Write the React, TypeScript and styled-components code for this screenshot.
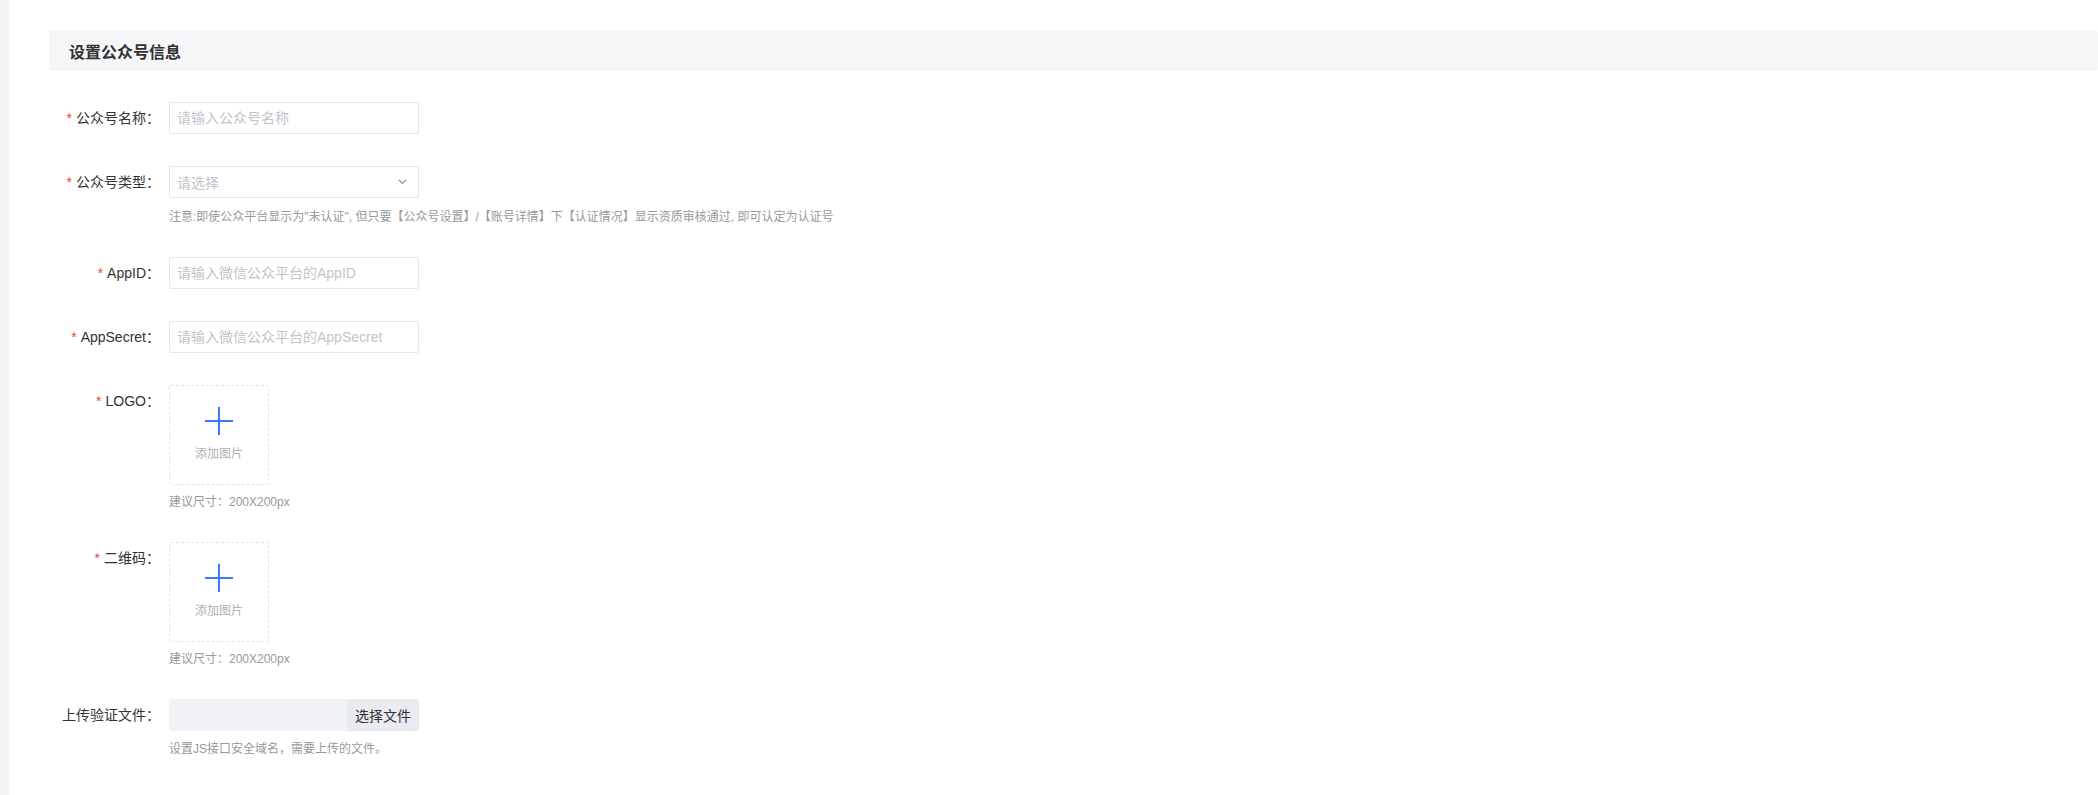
import styled, { createGlobalStyle } from "styled-components";

const GlobalStyle = createGlobalStyle`
  html, body {
    margin: 0;
    padding: 0;
    background: #f4f5f7;
  }
  body {
    font-family: "Liberation Sans", "Noto Sans CJK SC", sans-serif;
    color: #333;
  }
  * {
    box-sizing: border-box;
  }
`;

const Page = styled.div`
  padding-left: 9px;
  min-height: 100vh;
`;

const Panel = styled.div`
  background: #fff;
  min-height: 100vh;
  padding: 31px 0 40px 40px;
`;

const SectionHeader = styled.div`
  height: 40px;
  display: flex;
  align-items: center;
  padding-left: 20px;
  background: #f5f6f8;
  border-radius: 2px;
  font-size: 16px;
  font-weight: bold;
  color: #303133;
`;

const Form = styled.div`
  margin-top: 31px;
  display: flex;
  flex-direction: column;
`;

const FormItem = styled.div`
  display: flex;
  align-items: flex-start;
  margin-bottom: 32px;

  &:last-child {
    margin-bottom: 0;
  }
`;

const Label = styled.label`
  width: 120px;
  flex-shrink: 0;
  padding-right: 9px;
  text-align: right;
  line-height: 32px;
  font-size: 14px;
  color: #333;
  white-space: nowrap;
`;

const Required = styled.span`
  color: #f0442e;
  margin-right: 4px;
`;

const Field = styled.div`
  display: flex;
  flex-direction: column;
  align-items: flex-start;
`;

const TextInput = styled.input`
  width: 250px;
  height: 32px;
  padding: 0 7px;
  border: 1px solid #e4e7ed;
  border-radius: 2px;
  font-family: inherit;
  font-size: 14px;
  color: #333;
  outline: none;

  &::placeholder {
    color: #c0c4cc;
  }
`;

const SelectBox = styled.div`
  width: 250px;
  height: 32px;
  padding: 0 11px 0 7px;
  border: 1px solid #e4e7ed;
  border-radius: 2px;
  display: flex;
  align-items: center;
  justify-content: space-between;
  font-size: 14px;
  color: #c0c4cc;
`;

const Tip = styled.div<{ $gap?: number }>`
  margin-top: ${({ $gap }) => $gap ?? 11}px;
  font-size: 12px;
  line-height: 16px;
  color: #999;
  white-space: nowrap;
`;

const UploadBox = styled.div`
  width: 100px;
  height: 100px;
  border: 1px dashed #e3e3e3;
  border-radius: 2px;
  display: flex;
  flex-direction: column;
  align-items: center;
  padding-top: 21px;
  cursor: pointer;
`;

const UploadText = styled.div`
  margin-top: 11px;
  font-size: 12px;
  line-height: 16px;
  color: #b0b0b0;
`;

const FilePicker = styled.div`
  width: 250px;
  height: 32px;
  display: flex;
  background: #f0f2f5;
  border-radius: 3px;
  overflow: hidden;
`;

const FileName = styled.div`
  flex: 1;
`;

const FileButton = styled.div`
  width: 72px;
  display: flex;
  align-items: center;
  justify-content: center;
  background: #e8ebef;
  font-size: 14px;
  color: #333;
  cursor: pointer;
`;

const Chevron = () => (
  <svg width="9" height="6" viewBox="0 0 9 6" fill="none">
    <path d="M1 1l3.5 3.5L8 1" stroke="#8a8f99" strokeWidth="1.1" />
  </svg>
);

const Plus = () => (
  <svg width="28" height="28" viewBox="0 0 28 28" fill="none">
    <path d="M14 0v28M0 14h28" stroke="#3b7cf6" strokeWidth="2" />
  </svg>
);

const ImageUpload = () => (
  <UploadBox>
    <Plus />
    <UploadText>添加图片</UploadText>
  </UploadBox>
);

export default function App() {
  return (
    <>
      <GlobalStyle />
      <Page>
        <Panel>
          <SectionHeader>设置公众号信息</SectionHeader>
          <Form>
            <FormItem>
              <Label>
                <Required>*</Required>公众号名称：
              </Label>
              <Field>
                <TextInput placeholder="请输入公众号名称" />
              </Field>
            </FormItem>

            <FormItem>
              <Label>
                <Required>*</Required>公众号类型：
              </Label>
              <Field>
                <SelectBox>
                  <span>请选择</span>
                  <Chevron />
                </SelectBox>
                <Tip>
                  注意:即使公众平台显示为"未认证", 但只要【公众号设置】/【账号详情】下【认证情况】显示资质审核通过, 即可认定为认证号
                </Tip>
              </Field>
            </FormItem>

            <FormItem>
              <Label>
                <Required>*</Required>AppID：
              </Label>
              <Field>
                <TextInput placeholder="请输入微信公众平台的AppID" />
              </Field>
            </FormItem>

            <FormItem>
              <Label>
                <Required>*</Required>AppSecret：
              </Label>
              <Field>
                <TextInput placeholder="请输入微信公众平台的AppSecret" />
              </Field>
            </FormItem>

            <FormItem>
              <Label>
                <Required>*</Required>LOGO：
              </Label>
              <Field>
                <ImageUpload />
                <Tip $gap={9}>建议尺寸：200X200px</Tip>
              </Field>
            </FormItem>

            <FormItem>
              <Label>
                <Required>*</Required>二维码：
              </Label>
              <Field>
                <ImageUpload />
                <Tip $gap={9}>建议尺寸：200X200px</Tip>
              </Field>
            </FormItem>

            <FormItem>
              <Label>上传验证文件：</Label>
              <Field>
                <FilePicker>
                  <FileName />
                  <FileButton>选择文件</FileButton>
                </FilePicker>
                <Tip $gap={10}>设置JS接口安全域名，需要上传的文件。</Tip>
              </Field>
            </FormItem>
          </Form>
        </Panel>
      </Page>
    </>
  );
}
